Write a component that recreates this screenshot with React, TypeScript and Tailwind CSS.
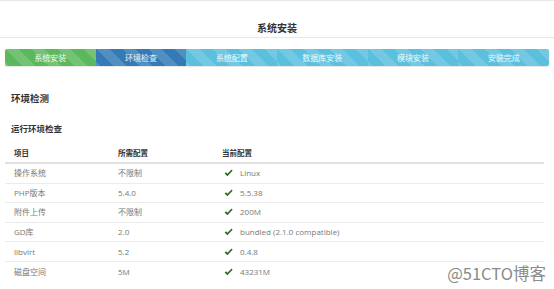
import React from "react";

const steps = [
  { label: "系统安装", color: "bg-[#5cb85c]" },
  { label: "环境检查", color: "bg-[#337ab7]" },
  { label: "系统配置", color: "bg-[#5bc0de]" },
  { label: "数据库安装", color: "bg-[#5bc0de]" },
  { label: "模块安装", color: "bg-[#5bc0de]" },
  { label: "安装完成", color: "bg-[#5bc0de]" },
];

const rows = [
  ["操作系统", "不限制", "Linux"],
  ["PHP版本", "5.4.0", "5.5.38"],
  ["附件上传", "不限制", "200M"],
  ["GD库", "2.0", "bundled (2.1.0 compatible)"],
  ["libvirt", "5.2", "0.4.8"],
  ["磁盘空间", "5M", "43231M"],
];

function Ok() {
  return (
    <svg width="9" height="8" viewBox="0 0 9 8" className="shrink-0">
      <path d="M0.6 4.6 L2.1 3.3 L3.4 4.8 L7.6 0.6 L8.6 1.7 L3.4 7.2 Z" fill="#2f6b1f" />
    </svg>
  );
}

export default function App() {
  return (
    <div className="relative w-[554px] h-[289px] overflow-hidden bg-white font-['Open_Sans','Noto_Sans_CJK_SC',sans-serif]">
      <div className="h-[38px] border-t border-b border-[#e8e8e8] flex items-end justify-center pb-[4px]">
        <span className="text-[10px] font-bold text-[#333] leading-none">系统安装</span>
      </div>

      <div className="mx-[5px] mt-[11px] h-[17px] flex rounded-[2px] overflow-hidden shadow-[0_1px_1px_rgba(0,0,0,0.1)]">
        {steps.map((s) => (
          <div
            key={s.label}
            className={`flex-1 flex items-center justify-center text-[8px] text-white/90 leading-none ${s.color} bg-[linear-gradient(45deg,rgba(255,255,255,.15)_25%,transparent_25%,transparent_50%,rgba(255,255,255,.15)_50%,rgba(255,255,255,.15)_75%,transparent_75%,transparent)] bg-[length:26px_26px]`}
          >
            {s.label}
          </div>
        ))}
      </div>

      <div className="px-[11px] mt-[28px]">
        <div className="text-[9.5px] font-bold text-[#333] leading-none">环境检测</div>
        <div className="mt-[21px] text-[8.5px] font-bold text-[#333] leading-none">运行环境检查</div>
      </div>

      <div className="mx-[5px] mt-[12px] w-[539px]">
        <div className="flex h-[19px] items-center border-b-2 border-[#e2e2e2] text-[7.5px] font-bold text-[#333]">
          <div className="w-[113px] pl-[9px]">项目</div>
          <div className="w-[104px]">所需配置</div>
          <div className="flex-1">当前配置</div>
        </div>
        {rows.map((r, i) => (
          <div
            key={r[0]}
            className={`flex h-[19.6px] items-center text-[8px] text-[#777] ${i < rows.length - 1 ? "border-b border-[#ebebeb]" : ""}`}
          >
            <div className="w-[113px] pl-[9px]">{r[0]}</div>
            <div className="w-[104px]">{r[1]}</div>
            <div className="flex-1 flex items-center gap-[7px] pl-[2px]">
              <Ok />
              <span>{r[2]}</span>
            </div>
          </div>
        ))}
      </div>

      <div className="absolute right-[8px] bottom-[8px] text-[16.5px] leading-none text-[#8a8a8a] font-['Noto_Sans_CJK_SC',sans-serif]">
        @51CTO博客
      </div>
    </div>
  );
}
